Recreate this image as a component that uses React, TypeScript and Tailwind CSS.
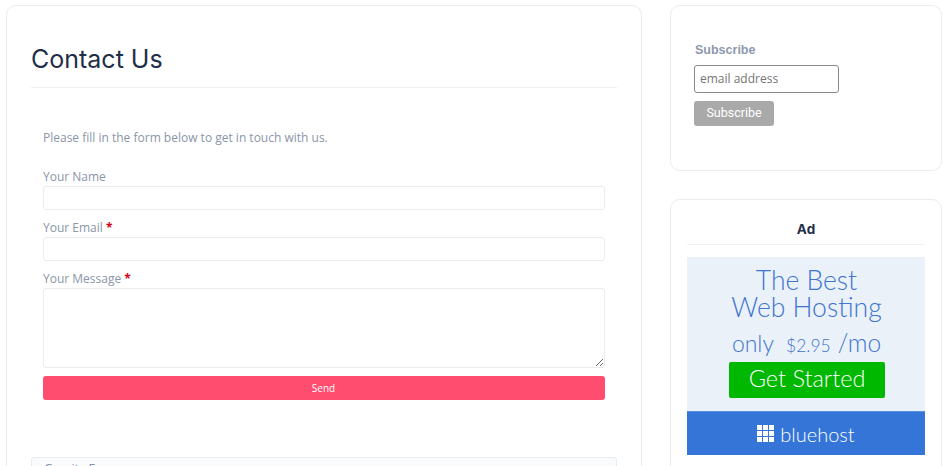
const open = { fontFamily: '"Open Sans", sans-serif' };
const lato = { fontFamily: 'Lato, "Open Sans", sans-serif' };

function Field({ label, required, tall }: { label: string; required?: boolean; tall?: boolean }) {
  return (
    <div className="flex flex-col">
      <label className="h-[19px] text-[12px] leading-[19px] text-[#8a96a8]" style={open}>
        {label}
        {required && <span className="font-bold text-[#d0021b]"> *</span>}
      </label>
      {tall ? (
        <textarea className="block h-[80px] w-full rounded-[3px] border border-[#e9ecef] bg-white" />
      ) : (
        <input className="block h-[24px] w-full rounded-[3px] border border-[#e9ecef] bg-white" />
      )}
    </div>
  );
}

export default function App() {
  return (
    <div className="flex h-[466px] w-[947px] items-start overflow-hidden bg-white pl-[6px] pt-[5px]">
      <main className="h-[500px] w-[636px] shrink-0 rounded-[10px] border border-[#e9ecef] px-[24px] pt-[37px]">
        <h1 className="h-[45px] border-b border-[#eef0f3] text-[25px] leading-[32px] text-[#1f2f4a]" style={{ fontFamily: 'Inter, sans-serif' }}>
          Contact Us
        </h1>
        <div className="px-[12px] pt-[41px]">
          <p className="h-[38px] text-[12px] leading-[18px] text-[#8a96a8]" style={open}>
            Please fill in the form below to get in touch with us.
          </p>
          <div className="flex flex-col gap-[8px]">
            <Field label="Your Name" />
            <Field label="Your Email" required />
            <Field label="Your Message" required tall />
          </div>
          <button className="mt-[8px] block h-[24px] w-full rounded-[3px] bg-[#ff4d6f] pr-[1px] text-[10px] font-medium text-white" style={open}>
            Send
          </button>
        </div>
        <div className="mt-[57px] h-[40px] rounded-[3px] border border-[#e9ecef] bg-[#fafbfc] px-[12px] text-[12.5px] leading-[22px] text-[#8492a6]" style={open}>
          Gravity Forms
        </div>
      </main>

      <aside className="ml-[28px] flex w-[272px] shrink-0 flex-col gap-[28px]">
        <section className="h-[166px] rounded-[10px] border border-[#e9ecef] px-[23px] pt-[36px]">
          <div className="pl-px text-[12.5px] font-bold leading-[17px] text-[#8d99ae]" style={{ fontFamily: '"Liberation Sans", sans-serif' }}>
            Subscribe
          </div>
          <input
            readOnly
            value="email address"
            className="mt-[6px] block h-[28px] w-[145px] rounded-[3px] border border-[#8a8a8a] px-[5px] pb-[2px] text-[12px] text-[#757575]"
            style={open}
          />
          <button className="mt-[8px] block h-[25px] w-[80px] rounded-[3px] bg-[#a9a9a9] text-[12.5px] font-normal text-white" style={{ fontFamily: 'Roboto, sans-serif' }}>
            Subscribe
          </button>
        </section>

        <section className="h-[300px] rounded-[10px] border border-[#e9ecef] px-[16px]">
          <div className="h-[45px] border-b border-[#eef0f3] pt-[20px] text-center text-[13.5px] font-bold leading-[18px] text-[#1f2f4a]" style={{ fontFamily: 'Inter, sans-serif' }}>
            Ad
          </div>
          <div className="mt-[12px] flex h-[198px] w-[238px] flex-col bg-[#eaf1f9]" style={lato}>
            <div className="flex flex-1 flex-col items-center text-[#3f74cf]">
              <div className="pl-[1px] pt-[10px] text-center text-[26.5px] font-light leading-[27px]">
                The Best
                <br />
                Web Hosting
              </div>
              <div className="ml-[1px] mt-[7px] flex h-[30px] items-baseline gap-[12px] text-[23px] font-light leading-[30px]">
                <span>only</span>
                <span className="flex items-baseline gap-[7px]">
                  <span className="text-[17.5px]">$2.95</span>
                  <span className="text-[24.5px]">/mo</span>
                </span>
              </div>
              <div className="ml-[2px] mt-[4px] flex h-[36px] w-[156px] items-center justify-center rounded-[2px] bg-[#00b800] pb-[2px] text-[23.5px] font-light text-white">
                Get Started
              </div>
            </div>
            <div className="flex h-[44px] items-center justify-center gap-[6px] border-t border-[#5a8fe0] bg-[#3575d8] text-white">
              <svg width="17" height="17" viewBox="0 0 17 17" fill="#fff">
                {[0, 6, 12].flatMap((x) =>
                  [0, 6, 12].map((y) => <rect key={`${x}-${y}`} x={x} y={y} width="5" height="5" />)
                )}
              </svg>
              <span className="text-[20px] font-light leading-[30px]">bluehost</span>
            </div>
          </div>
        </section>
      </aside>
    </div>
  );
}
